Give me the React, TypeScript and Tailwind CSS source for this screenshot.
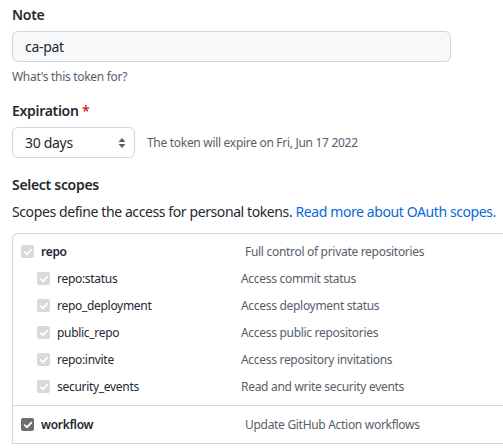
import type { ReactNode } from 'react';

const font = { fontFamily: '"Noto Sans", "Open Sans", sans-serif' };

function Check({ checked, disabled }: { checked?: boolean; disabled?: boolean }) {
  const bg = disabled ? 'bg-[#d9d9d9]' : checked ? 'bg-[#6e6e6e]' : 'bg-white border border-[#767676]';
  return (
    <span className={`flex h-[13px] w-[13px] shrink-0 items-center justify-center rounded-[2px] ${bg}`}>
      {checked && (
        <svg width="10" height="10" viewBox="0 0 10 10" fill="none">
          <path d="M1.8 5.2 L4 7.4 L8.3 2.6" stroke="white" strokeWidth="1.8" strokeLinecap="round" strokeLinejoin="round" />
        </svg>
      )}
    </span>
  );
}

interface ScopeRowProps {
  name: string;
  description: string;
  sub?: boolean;
  checked?: boolean;
  disabled?: boolean;
  bold?: boolean;
}

function ScopeRow({ name, description, sub = false, checked = true, disabled = true, bold = false }: ScopeRowProps) {
  return (
    <div className={`flex h-[27px] items-center ${sub ? 'pl-[24px]' : 'pl-[8px]'}`}>
      <Check checked={checked} disabled={disabled} />
      <span
        className={`ml-[7px] text-[12px] text-[#24292f] ${bold ? 'font-semibold' : ''} ${sub ? 'w-[184px]' : 'w-[204px]'}`}
      >
        {name}
      </span>
      <span className="text-[12px] text-[#57606a]">{description}</span>
    </div>
  );
}

function Label({ children }: { children: ReactNode }) {
  return <div className="text-[14px] font-semibold leading-5 text-[#24292f]">{children}</div>;
}

export default function App() {
  const subScopes = [
    { name: 'repo:status', description: 'Access commit status' },
    { name: 'repo_deployment', description: 'Access deployment status' },
    { name: 'public_repo', description: 'Access public repositories' },
    { name: 'repo:invite', description: 'Access repository invitations' },
    { name: 'security_events', description: 'Read and write security events' },
  ];

  return (
    <div className="h-[448px] w-[503px] overflow-hidden bg-white pl-3 pt-[5px] tracking-[-0.3px]" style={font}>
      <Label>Note</Label>
      <div className="mt-[6px] flex h-[31px] w-[439px] items-center rounded-md border border-[#d0d7de] bg-[#f6f8fa] px-3 text-[14px] text-[#24292f]">
        ca-pat
      </div>
      <div className="mt-[6px] text-[12px] leading-[18px] text-[#57606a]">What's this token for?</div>

      <div className="mt-[15px]">
        <Label>
          Expiration <span className="text-[#cf222e]">*</span>
        </Label>
      </div>
      <div className="mt-[6px] flex items-center">
        <div className="flex h-[31px] w-[123px] items-center justify-between rounded-md border border-[#d0d7de] bg-white pl-3 pr-[8px] text-[14px] text-[#24292f]">
          <span>30 days</span>
          <svg width="8" height="12" viewBox="0 0 8 12" fill="#57606a">
            <path d="M4 1 L7.5 5 L0.5 5 Z" />
            <path d="M4 11 L7.5 7 L0.5 7 Z" />
          </svg>
        </div>
        <span className="ml-3 text-[12px] text-[#57606a]">The token will expire on Fri, Jun 17 2022</span>
      </div>

      <div className="mt-[17px]">
        <Label>Select scopes</Label>
      </div>
      <p className="mt-[7px] whitespace-nowrap text-[14px] leading-5 tracking-[-0.4px] text-[#24292f]">
        Scopes define the access for personal tokens.{' '}
        <a className="text-[#0969da]" href="#">
          Read more about OAuth scopes.
        </a>
      </p>

      <div className="mt-[11px] w-[600px] rounded-tl-md border-l border-t border-[#d0d7de]">
        <div className="border-b border-[#d0d7de] pb-[5px] pt-[4px]">
          <ScopeRow name="repo" description="Full control of private repositories" bold />
          {subScopes.map((scope) => (
            <ScopeRow key={scope.name} name={scope.name} description={scope.description} sub />
          ))}
        </div>
        <div className="border-b border-[#d0d7de]">
          <div className="flex h-[37px] items-center pl-[8px]">
            <Check checked />
            <span className="ml-[7px] w-[204px] text-[12px] font-semibold text-[#24292f]">workflow</span>
            <span className="text-[12px] text-[#57606a]">Update GitHub Action workflows</span>
          </div>
        </div>
      </div>
    </div>
  );
}
